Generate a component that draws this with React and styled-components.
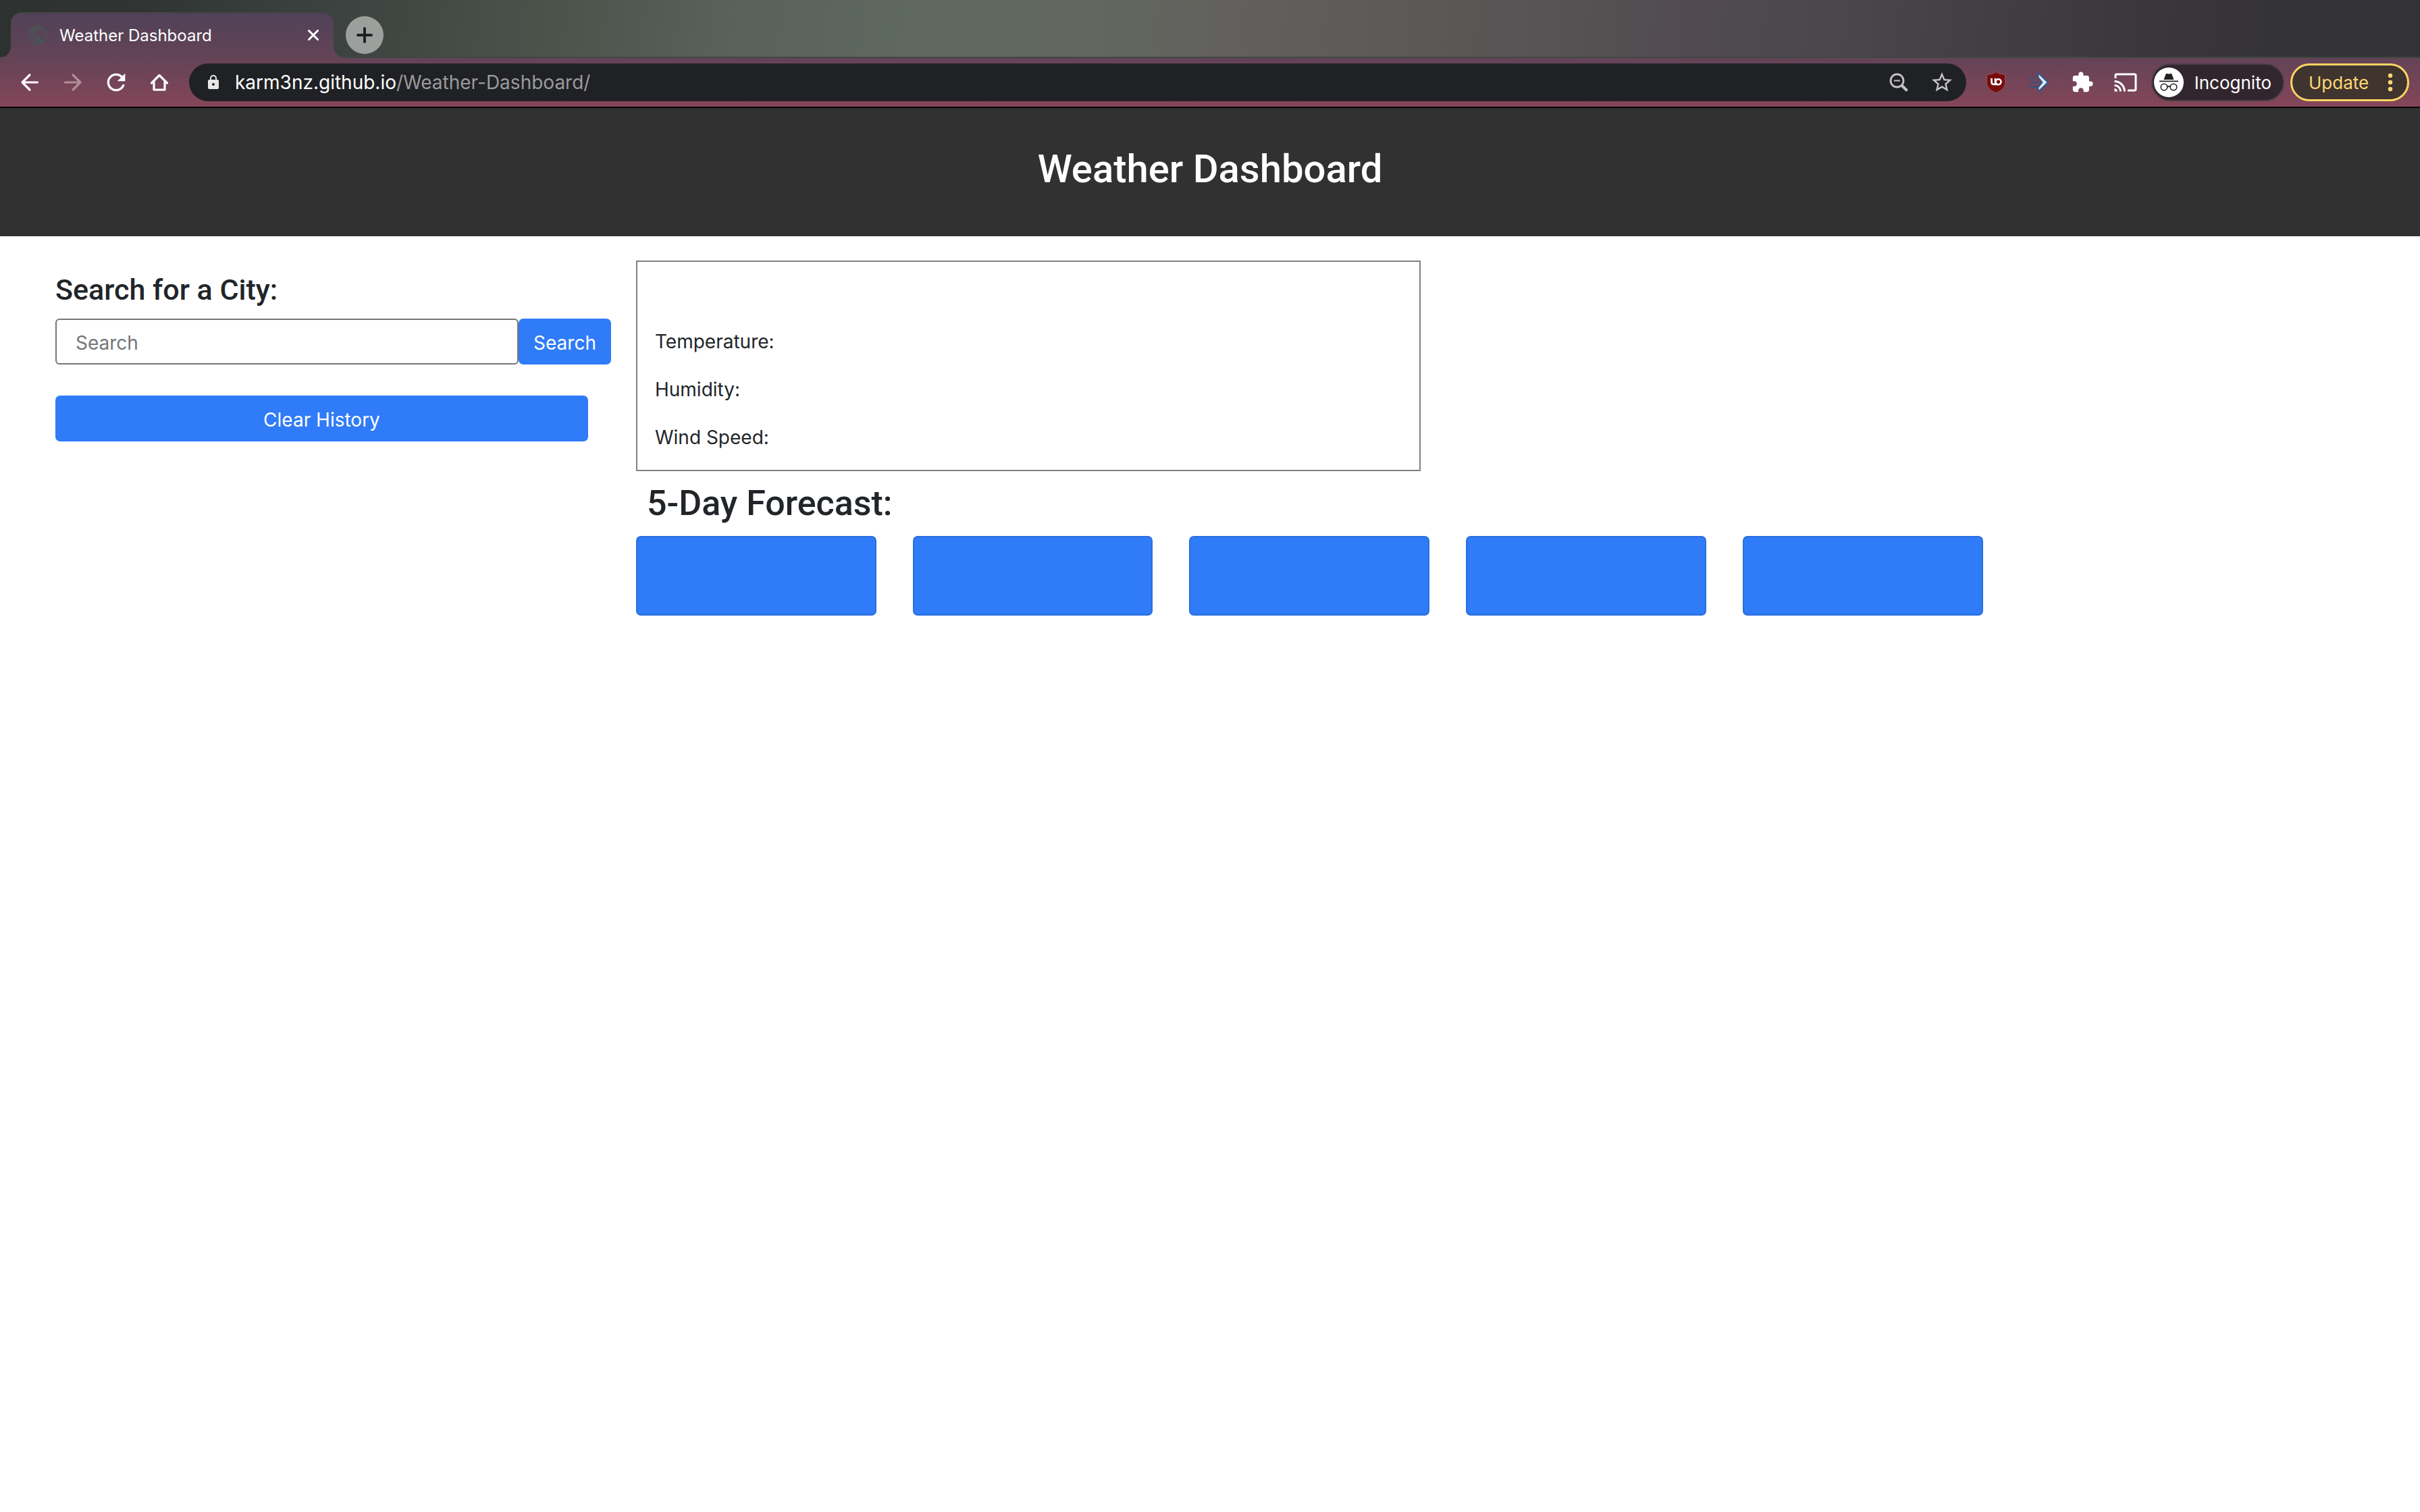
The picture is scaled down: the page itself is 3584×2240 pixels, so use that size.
import React from "react";
import styled, { createGlobalStyle, css } from "styled-components";
import { MdCast, MdExtension, MdLock, MdPublic, MdRefresh, MdStarBorder } from "react-icons/md";

const uiFont = 'Inter, "Liberation Sans", sans-serif';
const headingFont = 'Roboto, "Liberation Sans", sans-serif';

const GlobalStyle = createGlobalStyle`
  *, *::before, *::after { box-sizing: border-box; }
  body { margin: 0; background: #fff; color: #212529; font-family: ${uiFont}; font-size: 28px; }
  h1, h2, h3, p { margin: 0; }
  button, input { font-family: inherit; margin: 0; }
  svg { display: block; flex: none; }
`;

const Browser = styled.div`
  border-bottom: 2px solid #000;
`;

const TabStrip = styled.div`
  display: flex;
  align-items: flex-end;
  height: 86px;
  padding-left: 16px;
  border-bottom: 2px solid #414745;
  background: linear-gradient(97deg, #2d3230 0%, #303533 6%, #383e3b 11%, #414844 17%, #4b544b 23%, #58615a 30%, #5f6960 38%, #62685f 44%, #62605d 51%, #5b5957 59%, #545253 65%, #524c50 69%, #4a464a 76%, #443f42 81%, #3c383b 87%, #333236 95%, #333236 100%);
`;

const Tab = styled.div`
  position: relative;
  display: flex;
  align-items: center;
  width: 478px;
  height: 68px;
  margin-bottom: -2px;
  padding: 0 20px 2px 23px;
  border-top: 2px solid #464446;
  border-radius: 16px 16px 0 0;
  background: linear-gradient(#504257, #644357);
  color: #fff;
  font-size: 24px;

  &::before, &::after {
    content: "";
    position: absolute;
    bottom: 0;
    width: 16px;
    height: 16px;
  }
  &::before { right: 100%; background: radial-gradient(circle at 0 0, transparent 15px, #644357 16px); }
  &::after { left: 100%; background: radial-gradient(circle at 100% 0, transparent 15px, #644357 16px); }
`;

const TabTitle = styled.span`
  flex: 1;
  margin-left: 15px;
  white-space: nowrap;
`;

const IconButton = styled.button`
  display: grid;
  place-items: center;
  flex: none;
  width: ${(p) => p.$size}px;
  height: ${(p) => p.$size}px;
  padding: 0;
  border: 0;
  border-radius: 50%;
  background: ${(p) => p.$background || "transparent"};
  color: ${(p) => p.$color || "#fff"};
`;

const NewTab = styled(IconButton)`
  margin: 0 0 4px 18px;
`;

const Toolbar = styled.div`
  display: flex;
  align-items: center;
  height: 72px;
  padding: 0 16px 0 20px;
  background: linear-gradient(#644357, #844658);
`;

const NavButtons = styled.nav`
  display: flex;
  gap: 16px;
`;

const AddressBar = styled.div`
  display: flex;
  align-items: center;
  flex: 1;
  height: 56px;
  margin-left: 20px;
  padding: 0 12px 0 24px;
  border-radius: 28px;
  background: #202124;
  color: #c4c4c5;
`;

const Url = styled.a`
  flex: 1;
  margin-left: 20px;
  color: #9a9b9d;
  font-size: 28px;
  text-decoration: none;
`;

const Host = styled.span`
  color: #fff;
`;

const AddressActions = styled.div`
  display: flex;
  gap: 16px;
`;

const Extensions = styled.div`
  display: flex;
  gap: 16px;
  margin: 0 14px 0 20px;
`;

const Pill = styled.button`
  display: flex;
  align-items: center;
  justify-content: space-between;
  height: 56px;
  border-radius: 28px;
  font-size: 26px;
  ${(p) => p.$kind === "update" ? css`
    width: 176px;
    padding: 0 21px 0 24px;
    border: 3px solid #fdd663;
    background: #40342f;
    color: #fdd775;
  ` : css`
    width: 197px;
    margin-right: 9px;
    padding: 0 17px 0 2px;
    border: 2px solid #4b3d47;
    background: #32262e;
    color: #fff;
  `}
`;

const Header = styled.header`
  padding: 54px 32px 64px;
  background: #313131;
  color: #fff;
  text-align: center;
`;

const PageTitle = styled.h1`
  font-family: ${headingFont};
  font-size: 58px;
  font-weight: 500;
  line-height: 72px;
`;

const Main = styled.main`
  display: flex;
  align-items: flex-start;
  padding: 36px 0 0 82px;
`;

const Sidebar = styled.aside`
  flex: none;
  width: 23.5%;
`;

const SearchLabel = styled.label`
  display: block;
  margin: 14px 0;
  font-family: ${headingFont};
  font-size: 43px;
  font-weight: 500;
  line-height: 58px;
`;

const SearchForm = styled.form`
  display: flex;
  flex-wrap: wrap;
`;

const SearchInput = styled.input`
  flex: 1;
  min-width: 0;
  height: 68px;
  padding: 3px 28px 0;
  border: 2px solid #767676;
  border-radius: 6px;
  color: #212529;
  font-size: 28px;
  &::placeholder { color: #757575; opacity: 1; }
`;

const BlueButton = styled.button`
  height: 68px;
  padding: 3px 22px 0;
  border: 0;
  border-radius: 7px;
  background: #307bf7;
  color: #fff;
  font-size: 28px;
`;

const ClearButton = styled(BlueButton)`
  width: calc(100% - 34px);
  margin-top: 46px;
`;

const Results = styled.section`
  display: flex;
  flex-direction: column;
  flex: 1;
  margin-left: 37px;
`;

const Current = styled.section`
  width: 44%;
  padding: 83px 26px 12px;
  border: 2px solid #808080;
`;

const Reading = styled.p`
  font-size: 28px;
  line-height: 71px;
`;

const ForecastTitle = styled.h2`
  margin: 18px 0 18px 16px;
  font-family: ${headingFont};
  font-size: 52px;
  font-weight: 500;
  line-height: 60px;
`;

const Forecast = styled.ul`
  display: grid;
  grid-template-columns: repeat(5, 1fr);
  gap: 54px;
  width: 75.5%;
  margin: 0;
  padding: 0;
  list-style: none;
`;

const Day = styled.li`
  height: 118px;
  border: 2px solid #2b6fdf;
  border-radius: 7px;
  background: #307bf7;
`;

const CloseIcon = () => (
  <svg width="16" height="16" viewBox="0 0 16 16" stroke="currentColor" strokeWidth="3" strokeLinecap="round"><path d="M1.500 1.500 14.500 14.500M14.500 1.500 1.500 14.500" /></svg>
);
const PlusIcon = () => (
  <svg width="24" height="24" viewBox="0 0 24 24" stroke="currentColor" strokeWidth="4" strokeLinecap="round"><path d="M12 2v20M2 12h20" /></svg>
);
const BackIcon = () => (
  <svg width="28" height="28" viewBox="0 0 28 28" fill="none" stroke="currentColor" strokeWidth="3.200" strokeLinecap="round" strokeLinejoin="round"><path d="M25.500 14H3M14 3 3 14l11 11" /></svg>
);
const ForwardIcon = () => (
  <svg width="28" height="28" viewBox="0 0 28 28" fill="none" stroke="currentColor" strokeWidth="3.200" strokeLinecap="round" strokeLinejoin="round"><path d="M2.500 14H25M14 3l11 11-11 11" /></svg>
);
const HomeIcon = () => (
  <svg width="28" height="28" viewBox="0 0 28 28" fill="none" stroke="currentColor" strokeWidth="3.200" strokeLinejoin="round" strokeLinecap="round"><path d="M2.500 15 14 3.500 25.500 15M6 13v12h16V13" /></svg>
);
const ZoomOutIcon = () => (
  <svg width="28" height="28" viewBox="0 0 28 28" fill="none" stroke="currentColor" strokeWidth="2.800"><circle cx="11.500" cy="11.500" r="9.500" /><path d="M18 18l8.500 8.500" strokeWidth="4" /><path d="M7 11.500h9" strokeWidth="2" /></svg>
);
const ShieldIcon = () => (
  <svg width="32" height="32" viewBox="0 0 32 32"><path d="M16 .5c4 3 8 3.500 13.500 4v13c0 6-6 11-13.500 14C8.500 28.500 2.500 23.500 2.500 17.500v-13C8 4 12 3.500 16 .5z" fill="#780c0c" stroke="#94505a" /><g fill="none" stroke="#fff" strokeWidth="2.600"><path d="M9.500 10v5.500c0 2.500 1 3.500 3.500 3.500h6M15 10v9" /><circle cx="19.500" cy="15.200" r="4" /></g></svg>
);
const ArrowIcon = () => (
  <svg width="32" height="32" viewBox="0 0 32 32"><path d="M14.500 2 29 16 14.500 30v-6.500l6-7.500-6-7.500z" fill="#d7ebff" stroke="#2d5689" strokeWidth="2" strokeLinejoin="round" /><path d="M2 9.500h6M4 16h10M2 22.500h12" stroke="#2d5689" strokeWidth="2" strokeLinecap="round" /></svg>
);
const IncognitoIcon = () => (
  <svg width="44" height="44" viewBox="0 0 44 44"><circle cx="22" cy="22" r="22" fill="#fff" /><path d="M14.500 18l3-8c.5-1.500 2-1.200 4.500-.5 2.500-.7 4-1 4.500.5l3 8zM8 19.500h28v1.800H8z" fill="#202124" /><g fill="none" stroke="#202124" strokeWidth="1.600"><circle cx="15" cy="29" r="4.800" /><circle cx="29" cy="29" r="4.800" /><path d="M19.800 29c1-1.500 3.400-1.500 4.400 0" /></g></svg>
);
const DotsIcon = () => (
  <svg width="8" height="28" viewBox="0 0 8 28" fill="currentColor"><circle cx="4" cy="4" r="3.200" /><circle cx="4" cy="14" r="3.200" /><circle cx="4" cy="24" r="3.200" /></svg>
);

const days = [1, 2, 3, 4, 5];
const readings = ["Temperature:", "Humidity:", "Wind Speed:"];

export default function App() {
  return (
    <>
      <GlobalStyle />
      <Browser>
        <TabStrip>
          <Tab>
            <MdPublic size={34} color="#4b5154" />
            <TabTitle>Weather Dashboard</TabTitle>
            <IconButton $size={20} aria-label="Close tab"><CloseIcon /></IconButton>
          </Tab>
          <NewTab $size={56} $background="#9d9f9d" $color="#202124" aria-label="New tab"><PlusIcon /></NewTab>
        </TabStrip>
        <Toolbar>
          <NavButtons aria-label="Browser">
            <IconButton $size={48} aria-label="Back"><BackIcon /></IconButton>
            <IconButton $size={48} $color="#b18d99" aria-label="Forward"><ForwardIcon /></IconButton>
            <IconButton $size={48} aria-label="Reload"><MdRefresh size={40} /></IconButton>
            <IconButton $size={48} aria-label="Home"><HomeIcon /></IconButton>
          </NavButtons>
          <AddressBar>
            <MdLock size={24} color="#e8e8e8" />
            <Url href="#"><Host>karm3nz.github.io</Host>/Weather-Dashboard/</Url>
            <AddressActions>
              <IconButton $size={48} $color="#c4c4c5" aria-label="Zoom"><ZoomOutIcon /></IconButton>
              <IconButton $size={48} $color="#c4c4c5" aria-label="Bookmark"><MdStarBorder size={36} /></IconButton>
            </AddressActions>
          </AddressBar>
          <Extensions>
            <IconButton $size={48} aria-label="uBlock"><ShieldIcon /></IconButton>
            <IconButton $size={48} aria-label="Extension"><ArrowIcon /></IconButton>
            <IconButton $size={48} aria-label="Extensions"><MdExtension size={34} /></IconButton>
            <IconButton $size={48} aria-label="Cast"><MdCast size={36} /></IconButton>
          </Extensions>
          <Pill><IncognitoIcon />Incognito</Pill>
          <Pill $kind="update">Update<DotsIcon /></Pill>
        </Toolbar>
      </Browser>
      <Header><PageTitle>Weather Dashboard</PageTitle></Header>
      <Main>
        <Sidebar>
          <SearchLabel htmlFor="city">Search for a City:</SearchLabel>
          <SearchForm onSubmit={(e) => e.preventDefault()}>
            <SearchInput id="city" type="text" placeholder="Search" />
            <BlueButton type="submit">Search</BlueButton>
            <ClearButton type="button">Clear History</ClearButton>
          </SearchForm>
        </Sidebar>
        <Results>
          <Current>
            {readings.map((name) => <Reading key={name}>{name}</Reading>)}
          </Current>
          <ForecastTitle>5-Day Forecast:</ForecastTitle>
          <Forecast>
            {days.map((day) => <Day key={day} />)}
          </Forecast>
        </Results>
      </Main>
    </>
  );
}
